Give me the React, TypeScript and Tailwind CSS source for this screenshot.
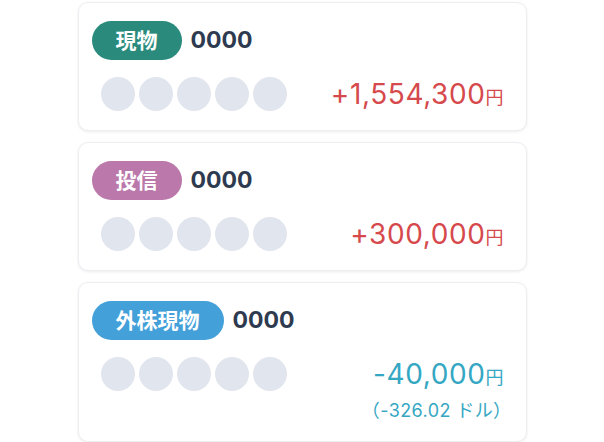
import React from 'react'

type Item = {
  label: string
  badge: string
  code: string
  amount: string
  tone: string
  sub?: string
}

const items: Item[] = [
  { label: '現物', badge: 'bg-[#2a8b7d]', code: '0000', amount: '+1,554,300', tone: 'text-[#d6494c]' },
  { label: '投信', badge: 'bg-[#bb78aa]', code: '0000', amount: '+300,000', tone: 'text-[#d6494c]' },
  { label: '外株現物', badge: 'bg-[#43a0d9]', code: '0000', amount: '-40,000', tone: 'text-[#35a7c3]', sub: '（-326.02 ドル）' },
]

const font = { fontFamily: 'Inter, "Noto Sans CJK JP", sans-serif' }

function Card({ item }: { item: Item }) {
  return (
    <div className="w-[449px] rounded-[10px] border border-[#eceef2] bg-white px-[13px] pt-[18px] pb-[19px] shadow-[0_1px_3px_rgba(0,0,0,0.08)]">
      <div className="flex items-center gap-[9px]">
        <span className={`${item.badge} flex h-[39px] items-center rounded-full px-[24px] text-[21px] leading-none font-bold text-white`}>
          {item.label}
        </span>
        <span className="text-[23px] leading-none font-bold text-[#2e3a4f]">{item.code}</span>
      </div>
      <div className="mt-[17px] flex items-start justify-between pl-[9px] pr-[9px]">
        <div className="flex gap-[4px]">
          {[0, 1, 2, 3, 4].map((i) => (
            <span key={i} className="size-[34px] rounded-full bg-[#e1e5ee]" />
          ))}
        </div>
        <div className={`${item.tone} text-right`}>
          <div className="h-[34px] text-[28px] leading-[34px] tracking-[0.6px]">
            {item.amount}
            <span className="text-[18px] leading-none tracking-normal">円</span>
          </div>
          {item.sub && (
            <div className="mt-[9px] -mr-[8px] text-[18px] leading-[22px] tracking-[0.4px]">{item.sub}</div>
          )}
        </div>
      </div>
    </div>
  )
}

export default function App() {
  return (
    <div className="flex min-h-screen flex-col items-center gap-[11px] bg-white pt-[2px]" style={font}>
      {items.map((item, i) => (
        <Card key={i} item={item} />
      ))}
    </div>
  )
}
